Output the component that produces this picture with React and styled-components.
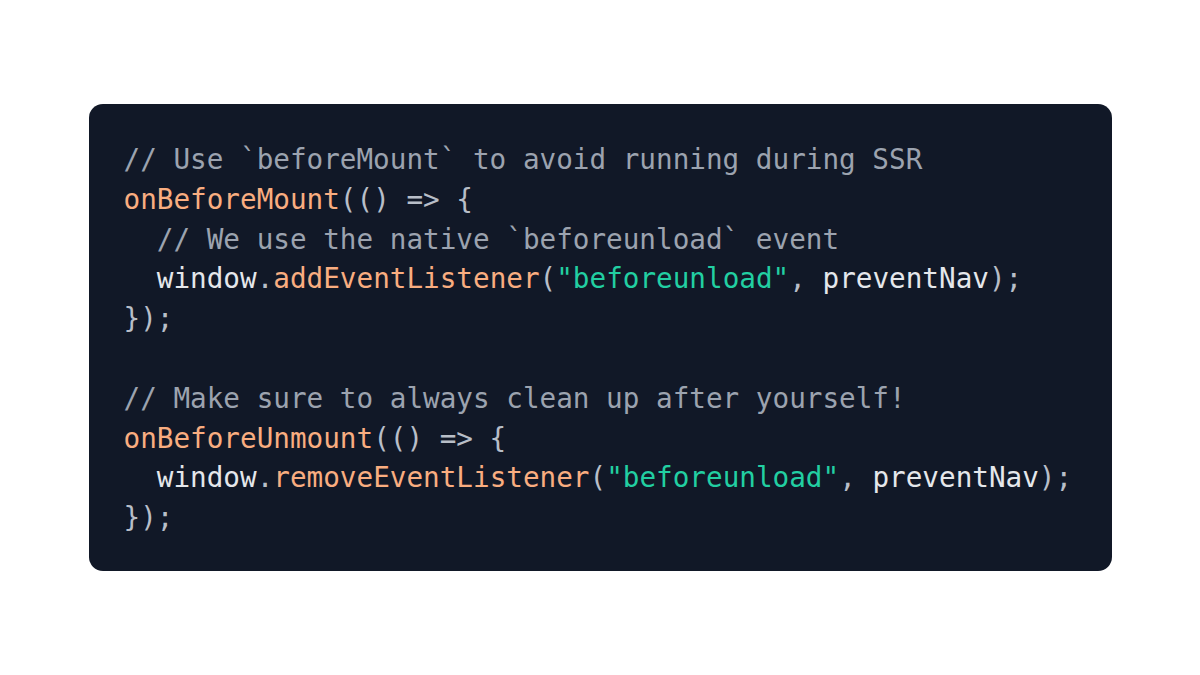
import styled, { createGlobalStyle } from "styled-components";

const GlobalStyle = createGlobalStyle`
	html, body {
		margin: 0;
		padding: 0;
		background: #ffffff;
	}
`;

const lines = [
	[{ t: "// Use `beforeMount` to avoid running during SSR", k: "comment" }],
	[
		{ t: "onBeforeMount", k: "fn" },
		{ t: "(() => {", k: "punct" },
	],
	[{ t: "  // We use the native `beforeunload` event", k: "comment" }],
	[
		{ t: "  window", k: "plain" },
		{ t: ".", k: "punct" },
		{ t: "addEventListener", k: "fn" },
		{ t: "(", k: "punct" },
		{ t: '"beforeunload"', k: "str" },
		{ t: ", ", k: "punct" },
		{ t: "preventNav", k: "plain" },
		{ t: ");", k: "punct" },
	],
	[{ t: "});", k: "punct" }],
	[],
	[{ t: "// Make sure to always clean up after yourself!", k: "comment" }],
	[
		{ t: "onBeforeUnmount", k: "fn" },
		{ t: "(() => {", k: "punct" },
	],
	[
		{ t: "  window", k: "plain" },
		{ t: ".", k: "punct" },
		{ t: "removeEventListener", k: "fn" },
		{ t: "(", k: "punct" },
		{ t: '"beforeunload"', k: "str" },
		{ t: ", ", k: "punct" },
		{ t: "preventNav", k: "plain" },
		{ t: ");", k: "punct" },
	],
	[{ t: "});", k: "punct" }],
];

const App = () => {
	return (
		<>
			<GlobalStyle />
			<Page>
				<CodeCard>
					{lines.map((tokens, i) => (
						<Line key={i}>
							{tokens.length === 0
								? " "
								: tokens.map((tok, j) => (
										<Token key={j} $kind={tok.k}>
											{tok.t}
										</Token>
								  ))}
						</Line>
					))}
				</CodeCard>
			</Page>
		</>
	);
};

export default App;

const colors = {
	comment: "#9ca3af",
	fn: "#f9ad80",
	str: "#22cfa2",
	plain: "#e5e7eb",
	punct: "#b8bec8",
};

const Page = styled.div`
	width: 1200px;
	height: 675px;
	display: flex;
	justify-content: center;
	align-items: center;
	background: #ffffff;
`;

const CodeCard = styled.pre`
	margin: 0;
	width: 1023px;
	box-sizing: border-box;
	padding: 36px 35px 33px;
	background-color: #111827;
	border-radius: 14px;
	font-family: "DejaVu Sans Mono", "Liberation Mono", monospace;
	font-size: 27.65px;
	line-height: 39.8px;
	color: #e5e7eb;
`;

const Line = styled.div`
	white-space: pre;
	height: 39.8px;
`;

const Token = styled.span`
	color: ${(p) => colors[p.$kind]};
`;
